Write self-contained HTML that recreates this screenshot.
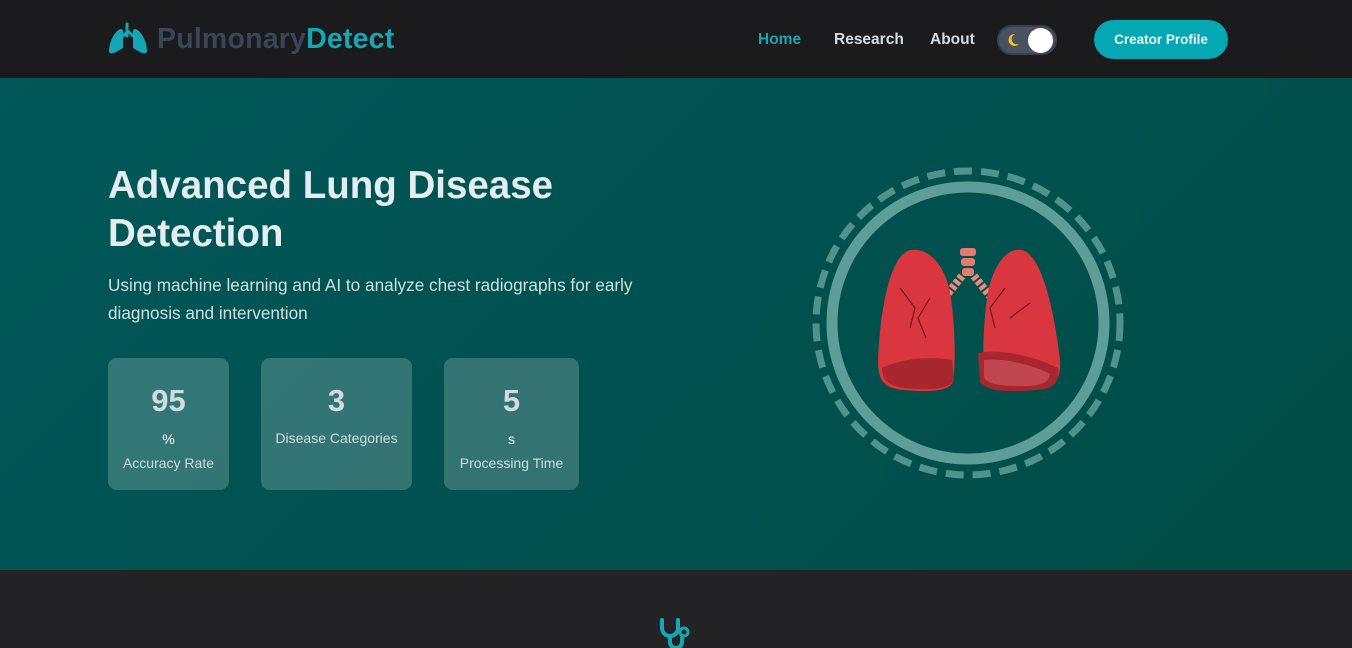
<!DOCTYPE html>
<html><head><meta charset="utf-8"><style>
*{margin:0;padding:0;box-sizing:border-box}
body{width:1352px;height:646px;overflow:hidden;background:#232325;font-family:"Liberation Sans",sans-serif;position:relative}
.hdr{height:78px;background:#1b1b1d;position:relative}
.logo{position:absolute;left:108px;top:22px;display:flex;align-items:center;font-weight:bold;font-size:28.5px;letter-spacing:0.2px}
.logo .a{color:#3a4558}.logo .b{color:#16a7b4}
.nav{position:absolute;top:31px;font-size:15.5px;font-weight:bold;color:#d5dbe2}
.tog{position:absolute;left:997px;top:25px;width:60px;height:30px;border-radius:15px;background:#4a5160;border:2px solid #3a404c}
.tog .k{position:absolute;right:2px;top:1px;width:25px;height:25px;border-radius:50%;background:#fff}
.btn{position:absolute;left:1094px;top:20px;width:134px;height:39px;border-radius:20px;background:#04a7b4;color:#f1fafb;font-weight:bold;font-size:13.5px;text-align:center;line-height:39px}
.hero{position:absolute;top:78px;left:0;width:1352px;height:492px;background:linear-gradient(135deg,#015759,#004c46)}
h1{position:absolute;left:108px;font-size:38.5px;line-height:48px;color:#e4eef0;font-weight:bold;width:520px}
.sub{position:absolute;left:108px;font-size:17.2px;line-height:28px;color:#cfe0e2;width:560px}
.card{position:absolute;height:132px;background:rgba(255,255,255,0.2);border-radius:9px;text-align:center;color:#cfdde0}
.card .n{font-size:31px;font-weight:bold;margin-top:26px;line-height:34px;color:#d0dbe2}
.card .u{font-size:14px;color:#fff;margin-top:13px;line-height:16px}
.card .l{font-size:14px;margin-top:8px;line-height:16px}
</style></head><body>
<div class="hdr">
<div class="logo"><svg width="40" height="34" viewBox="0 0 40 34"><path d="M19 2v12M19 10l-4 4M21 10l4 4" stroke="#16a7b4" stroke-width="3" fill="none" stroke-linecap="round"/><path d="M13 7C7 8 1 20 1 29c0 3 3 3 7 1l7-4V10c0-2-1-3-2-3z" fill="#16a7b4"/><path d="M27 7c6 1 12 13 12 22 0 3-3 3-7 1l-7-4V10c0-2 1-3 2-3z" fill="#16a7b4"/></svg><span class="a" style="margin-left:9px">Pulmonary</span><span class="b">Detect</span></div>
<div class="nav" style="left:758px;color:#1aa5b1">Home</div>
<div class="nav" style="left:834px">Research</div>
<div class="nav" style="left:930px">About</div>
<div class="tog"><svg style="position:absolute;left:6px;top:5px" width="16" height="16" viewBox="0 0 16 16"><path d="M10 2A6 6 0 1 0 14 12 5 5 0 0 1 10 2z" fill="#f4c21e"/></svg><div class="k"></div></div>
<div class="btn">Creator Profile</div>
</div>
<div class="hero">
<svg style="position:absolute;left:810px;top:88px" width="316" height="316" viewBox="0 0 316 316">
<circle cx="158" cy="157" r="152" fill="none" stroke="#5f9e98" stroke-width="7" stroke-dasharray="18 9" opacity="0.85"/>
<circle cx="158" cy="157" r="136" fill="none" stroke="#5f9e98" stroke-width="11"/>
<g transform="translate(0,2)">
<rect x="150" y="80" width="16" height="8" rx="3" fill="#e57a6e"/><rect x="151" y="90" width="14" height="8" rx="3" fill="#e57a6e"/><rect x="152" y="100" width="12" height="8" rx="3" fill="#e57a6e"/>
<path d="M152 108l-24 30M164 108l24 30" stroke="#e88a7c" stroke-width="8" stroke-dasharray="4 2"/>
<path d="M100 82c-20 5-30 60-32 110 0 20 5 28 25 30 25 2 45 2 50-8 3-20 2-60-3-90-5-25-20-45-40-42z" fill="#d9363f"/>
<path d="M212 82c20 5 32 60 38 110 1 20-5 28-25 30-25 2-45 2-50-8-3-20-2-60 3-90 5-25 18-45 34-42z" fill="#d9363f"/>
<path d="M72 200c20-10 50-12 70-8l2 20c-5 10-25 10-50 8-15-2-22-8-22-20z" fill="#a8262e"/>
<path d="M168 185c25-5 60 5 80 15 2 15-5 22-25 22-25 2-45 2-53-8z" fill="#a8262e"/>
<path d="M174 192c20-2 50 5 66 14-2 10-10 12-30 12-20 0-35-2-36-10z" fill="#c14650"/>
<path d="M90 120l15 20-5 20M120 130l-12 20 8 20M195 120l-15 20 5 20M220 135l-20 15" stroke="#6e1a20" stroke-width="1.2" fill="none"/>
</g>
</svg>
<h1 style="top:84px">Advanced Lung Disease Detection</h1>
<div class="sub" style="top:193px">Using machine learning and AI to analyze chest radiographs for early diagnosis and intervention</div>
<div class="card" style="left:108px;width:121px;top:280px"><div class="n">95</div><div class="u">%</div><div class="l">Accuracy Rate</div></div>
<div class="card" style="left:261px;width:151px;top:280px"><div class="n">3</div><div class="l" style="margin-top:12px">Disease Categories</div></div>
<div class="card" style="left:444px;width:135px;top:280px"><div class="n">5</div><div class="u">s</div><div class="l">Processing Time</div></div>
</div>
<svg style="position:absolute;left:656px;top:616px" width="40" height="32" viewBox="0 0 40 32"><path d="M6 4v8a8 8 0 0 0 16 0V4M14 20v6a6 6 0 0 0 12 0v-4" stroke="#16a7b4" stroke-width="4" fill="none" stroke-linecap="round"/><circle cx="28" cy="16" r="4" fill="none" stroke="#16a7b4" stroke-width="3"/></svg>
</body></html>
